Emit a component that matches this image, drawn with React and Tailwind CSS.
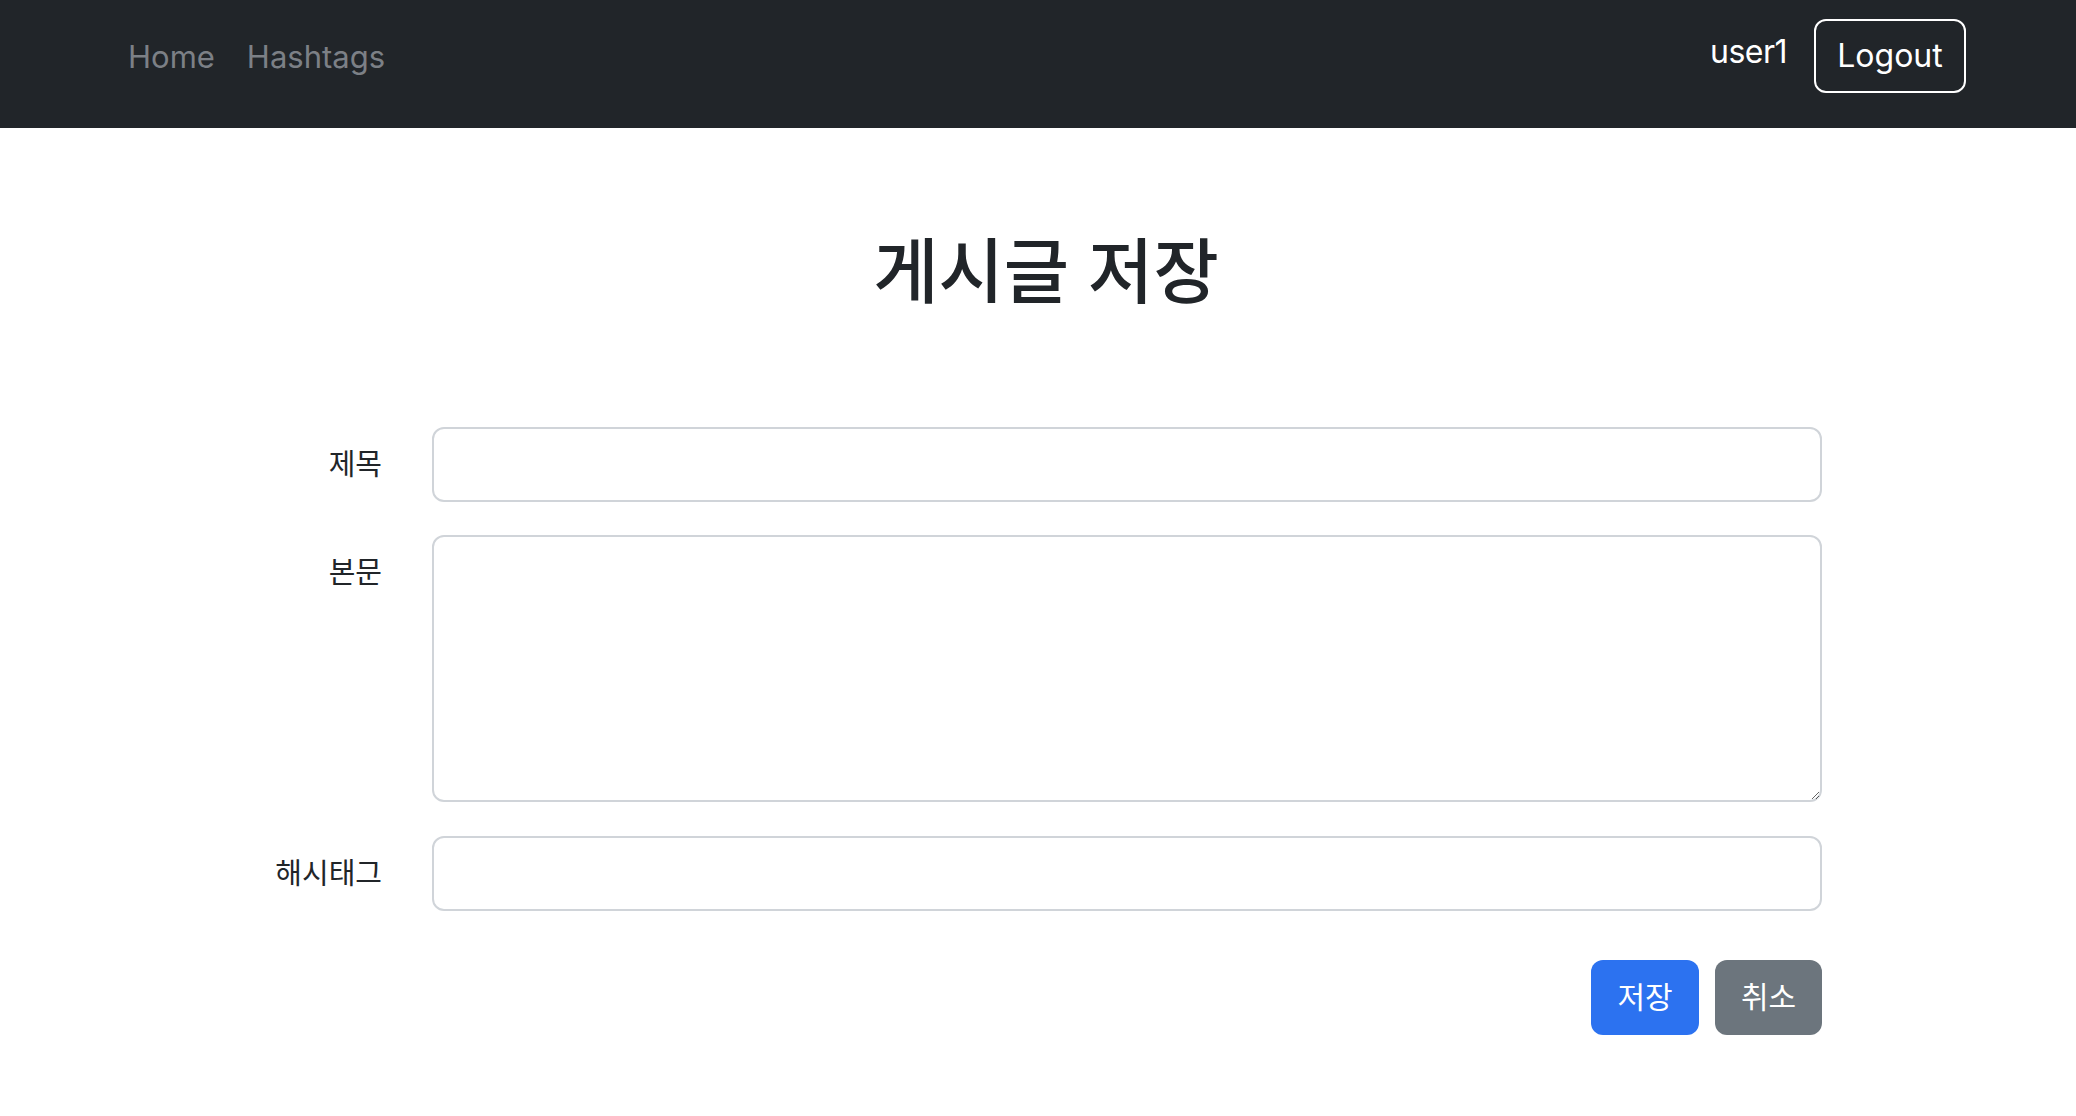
export default function App() {
    return (
        <div className="min-h-screen bg-white text-[#212529] font-['Inter','Noto_Sans_CJK_KR',sans-serif]">
            <nav className="h-[128px] bg-[#212529] flex items-center justify-between pl-[112px] pr-[110px] pb-[16px]">
                <div className="flex items-center text-[31px] text-[#7c8086]">
                    <a className="px-4 leading-none">Home</a>
                    <a className="px-4 leading-none">Hashtags</a>
                </div>
                <div className="flex items-center">
                    <span className="text-[32px] text-white leading-none mb-[8px] tracking-[-0.5px]">user1</span>
                    <button className="ml-[27px] w-[152px] h-[74px] border-2 border-white rounded-[12px] text-[32px] text-white leading-none">
                        Logout
                    </button>
                </div>
            </nav>

            <main>
                <h1 className="text-center text-[71px] font-medium leading-[1.2] mt-[101px] pl-[16px]">게시글 저장</h1>

                <form className="ml-[200px] w-[1622px] mt-[113px] flex flex-col">
                    <div className="flex gap-[50px]">
                        <label className="w-[182px] h-[75px] flex items-center justify-end text-[29px]">제목</label>
                        <input className="flex-1 h-[75px] border-2 border-[#d0d4d9] rounded-[12px] px-6 text-[28px] outline-none" />
                    </div>
                    <div className="flex gap-[50px] mt-[33px]">
                        <label className="w-[182px] h-[75px] flex items-center justify-end text-[29px]">본문</label>
                        <textarea className="flex-1 h-[267px] border-2 border-[#d0d4d9] rounded-[12px] px-6 py-4 text-[28px] outline-none" />
                    </div>
                    <div className="flex gap-[50px] mt-[34px]">
                        <label className="w-[182px] h-[75px] flex items-center justify-end text-[29px]">해시태그</label>
                        <input className="flex-1 h-[75px] border-2 border-[#d0d4d9] rounded-[12px] px-6 text-[28px] outline-none" />
                    </div>
                    <div className="flex justify-end gap-[16px] mt-[49px]">
                        <button type="button" className="w-[108px] h-[75px] rounded-[12px] bg-[#2c72f0] text-white text-[30px]">저장</button>
                        <button type="button" className="w-[107px] h-[75px] rounded-[12px] bg-[#6c757d] text-white text-[30px]">취소</button>
                    </div>
                </form>
            </main>
        </div>
    );
}
